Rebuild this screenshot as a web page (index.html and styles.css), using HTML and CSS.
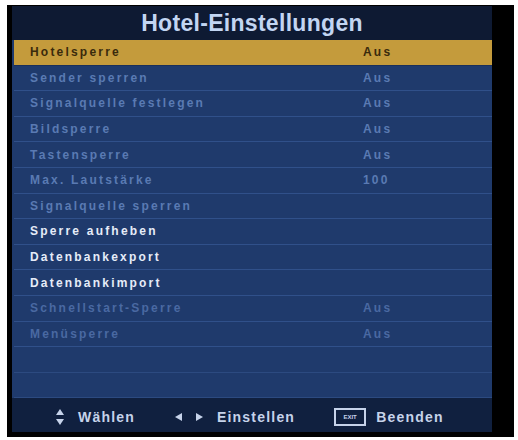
FILE: index.html
```html
<!DOCTYPE html>
<html lang="de">
<head>
  <meta charset="UTF-8" />
  <title>Hotel-Einstellungen</title>
  <link rel="stylesheet" href="styles.css">
</head>
<body>
  <div class="tv">
    <div class="panel">
      <h1 class="title">Hotel-Einstellungen</h1>
      <ul class="menu">
        <li class="row active"><span class="label">Hotelsperre</span><span class="value">Aus</span></li>
        <li class="row dim"><span class="label">Sender sperren</span><span class="value">Aus</span></li>
        <li class="row dim"><span class="label">Signalquelle festlegen</span><span class="value">Aus</span></li>
        <li class="row dim"><span class="label">Bildsperre</span><span class="value">Aus</span></li>
        <li class="row dim"><span class="label">Tastensperre</span><span class="value">Aus</span></li>
        <li class="row dim"><span class="label">Max. Lautstärke</span><span class="value">100</span></li>
        <li class="row dim"><span class="label">Signalquelle sperren</span><span class="value"></span></li>
        <li class="row"><span class="label">Sperre aufheben</span><span class="value"></span></li>
        <li class="row"><span class="label">Datenbankexport</span><span class="value"></span></li>
        <li class="row"><span class="label">Datenbankimport</span><span class="value"></span></li>
        <li class="row faint"><span class="label">Schnellstart-Sperre</span><span class="value">Aus</span></li>
        <li class="row faint"><span class="label">Menüsperre</span><span class="value">Aus</span></li>
        <li class="row empty"></li>
        <li class="row empty"></li>
      </ul>
      <div class="footer">
        <span class="hint">
          <svg class="icon" width="10" height="18" viewBox="0 0 10 18">
            <polygon points="5,1 9,7 1,7" fill="#c6d3ea"/>
            <polygon points="1,11 9,11 5,17" fill="#c6d3ea"/>
          </svg>
          Wählen
        </span>
        <span class="hint">
          <svg class="icon" width="30" height="10" viewBox="0 0 30 10">
            <polygon points="1,5 8,1 8,9" fill="#c6d3ea"/>
            <polygon points="22,1 29,5 22,9" fill="#c6d3ea"/>
          </svg>
          Einstellen
        </span>
        <span class="hint exit-hint">
          <span class="exit">EXIT</span>
          Beenden
        </span>
      </div>
    </div>
  </div>
</body>
</html>
```

FILE: styles.css
```css
body {
  margin: 0;
  background: #fff;
  font-family: "Liberation Sans", Arial, sans-serif;
}
.tv {
  width: 507px;
  height: 432px;
  margin: 5px 0 0 7px;
  padding: 1px 22px 5px 5px;
  box-sizing: border-box;
  background: #000;
}
.panel {
  height: 100%;
  display: flex;
  flex-direction: column;
  background: #1f3a6c;
}
.title {
  height: 34px;
  margin: 0;
  background: #0e1a33;
  color: #c2d5f2;
  font-size: 23px;
  font-weight: bold;
  line-height: 34px;
  text-align: center;
  letter-spacing: 0.3px;
}
.menu {
  list-style: none;
  margin: 0;
  padding: 0;
}
.row {
  height: 25.6px;
  box-sizing: border-box;
  display: flex;
  align-items: center;
  padding: 0 0 0 16px;
  margin-left: 2px;
  border-bottom: 1px solid #30508a;
  font-size: 12px;
  font-weight: bold;
  letter-spacing: 2.2px;
  color: #e6ecf8;
}
.label {
  width: 333px;
}
.value {
  flex: 1;
}
.row.active {
  background: #c49b3c;
  color: #3a2a0c;
  border-bottom-color: #1a2f5a;
}
.row.dim {
  color: #5a7ab3;
}
.row.faint {
  color: #4a69a2;
}
.row.empty {
  border-bottom-color: #2c4a80;
}
.footer {
  flex: 1;
  display: flex;
  align-items: center;
  padding: 4px 0 0 43px;
  gap: 39px;
  background: #10203f;
  color: #c6d3ea;
  font-size: 14px;
  font-weight: bold;
  letter-spacing: 1.2px;
}
.hint {
  display: flex;
  align-items: center;
  gap: 13px;
}
.exit-hint {
  gap: 10px;
}
.exit {
  display: inline-block;
  width: 28px;
  height: 14px;
  border: 2px solid #c6d3ea;
  font-size: 6px;
  line-height: 14px;
  text-align: center;
  letter-spacing: 0;
}
```
